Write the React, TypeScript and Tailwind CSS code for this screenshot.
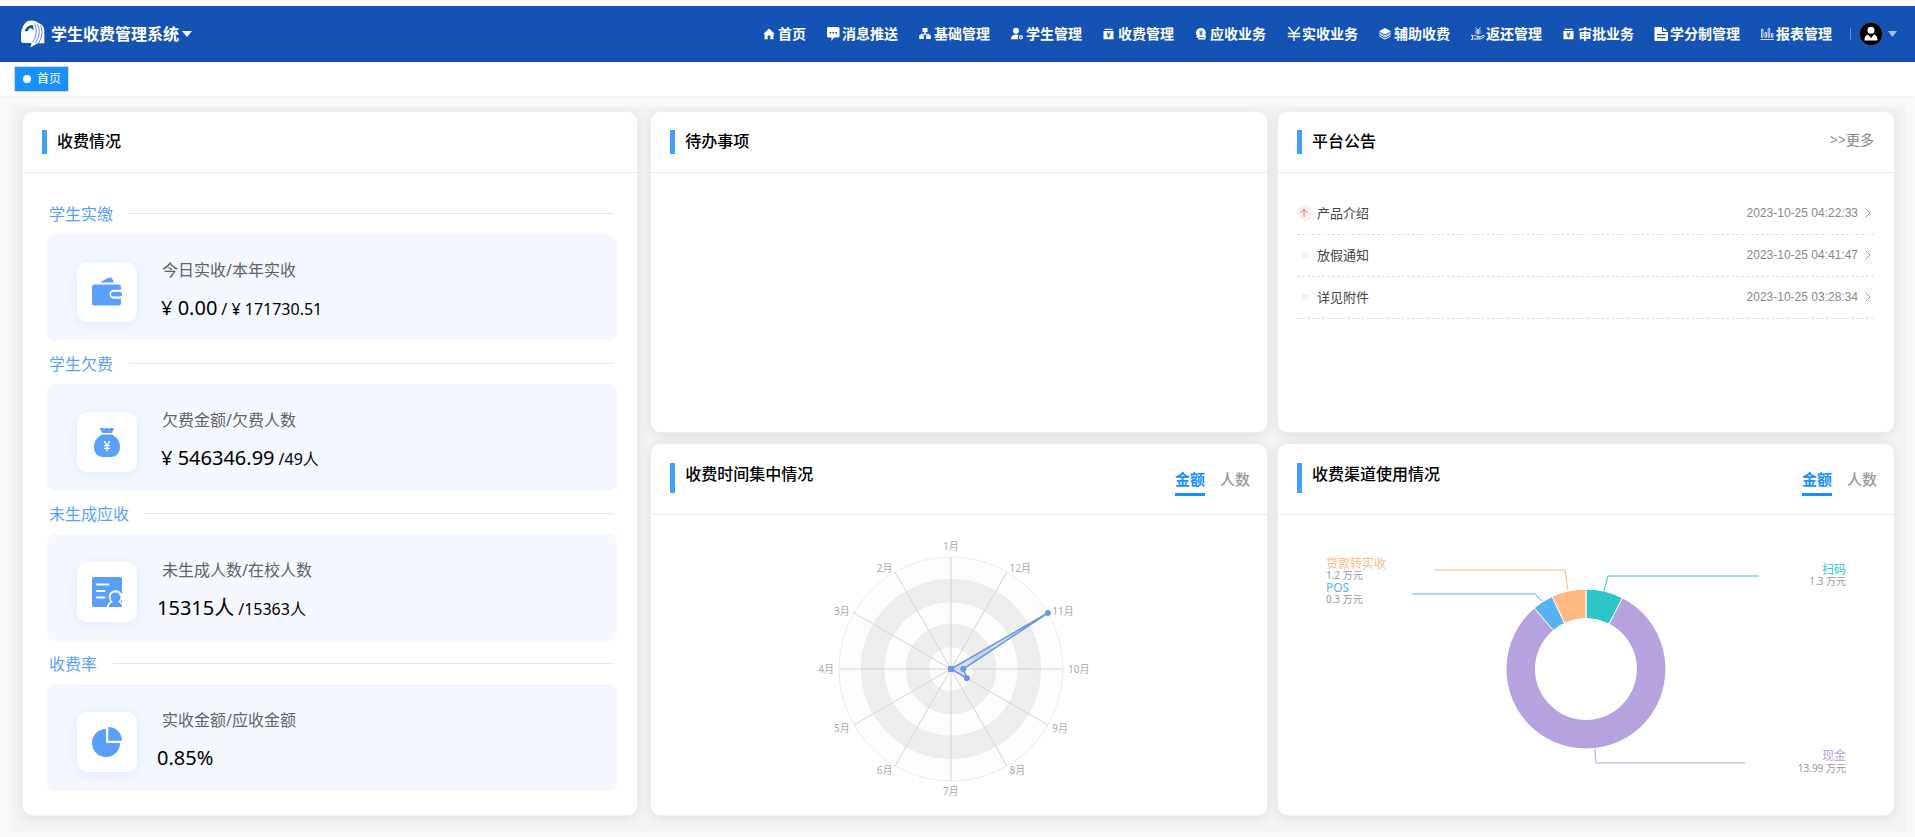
import { useState, type ReactNode } from 'react';
import clsx from 'clsx';

type Mode = 'amount' | 'people';

/* ---------- nav icons, all on a 16px grid ---------- */

function NavIcon({ children }: { children: ReactNode }) {
  return (
    <svg viewBox="0 0 16 16" className="size-4 shrink-0" fill="currentColor" aria-hidden="true">
      {children}
    </svg>
  );
}

const HomeIcon = (
  <NavIcon>
    <path d="M7 2.500 1.300 8H2.500v5.200h3.200V9.500h2.600v3.700h3.200V8h1.300z" />
  </NavIcon>
);

const MessageIcon = (
  <NavIcon>
    <path
      fillRule="evenodd"
      d="M2.500 1h9.500A1.500 1.500 0 0 1 13.500 2.500v7.500a1.500 1.500 0 0 1-1.500 1.500H8L5.500 15v-3.500h-3A1.500 1.500 0 0 1 1 10V2.500A1.500 1.500 0 0 1 2.500 1zM3.500 6v1.500h1.700V6zm2.900 0v1.500h1.700V6zm2.900 0v1.500H11V6z"
    />
  </NavIcon>
);

const SitemapIcon = (
  <NavIcon>
    <path d="M4.500 2h5v4H7.700v1.700h3.600v1.500h1.500V13H8.200V9.200H10v-.5H4v.5h1.800V13H1.200V9.200h1.500V7.700h3.600V6H4.500z" />
  </NavIcon>
);

const StudentIcon = (
  <NavIcon>
    <circle cx="6" cy="4.800" r="3" />
    <path d="M1 13.200c0-3.200 2-4.700 5-4.700 1 0 2 .2 2.700.6-.9 1-1.100 2.700-.4 4.100z" />
    <path fillRule="evenodd" d="M11 9.300a2 2 0 1 1 0 4.100 2 2 0 0 1 0-4.100zm0 1.300a.8.8 0 1 0 0 1.600.8.8 0 0 0 0-1.600z" />
  </NavIcon>
);

const CashBoxIcon = (
  <NavIcon>
    <path d="M2.500 2.800h8V4h-8z" />
    <path
      fillRule="evenodd"
      d="M1.500 5h10v8.200h-10zm2.900 1.500 1.300 1.900h-1v.8h1.400v.5H4.700v.7h1.400v1.200h.9v-1.200h1.400v-.7H7v-.5h1.400v-.8h-1l1.300-1.900H7.600L6.500 8.100 5.400 6.500z"
    />
  </NavIcon>
);

const CoinHandIcon = (
  <NavIcon>
    <path
      fillRule="evenodd"
      d="M7 2a4.700 4.700 0 0 1 4.100 7c.8.500 1.100 1.200.8 2l-.6 1.400v1H4.300v-1.500L2 11l1.300-1A4.700 4.700 0 0 1 7 2zM5.100 4.400l1.400 2.200h-1v.7h1.100v.6H5.500v.7h1.100v1.200h.9V8.600h1.100v-.7H7.500v-.6h1.100v-.7h-1L9 4.400H8L7 6 6.100 4.400zM4 10.900l2.300.9h4v-.7H6.700z"
    />
  </NavIcon>
);

const YuanIcon = (
  <NavIcon>
    <path d="m2.500 1 5.500 6.500L13.500 1M1.800 7.500h12.400M1.800 10.500h12.400M8 7.500V15" fill="none" stroke="currentColor" strokeWidth="1.400" />
  </NavIcon>
);

const LayersIcon = (
  <NavIcon>
    <path d="m7 2 6 3.200-6 3.300-6-3.300z" />
    <path d="m1.300 7.900 5.700 3.100 5.700-3.100M1.300 10l5.700 3.100 5.700-3.100" fill="none" stroke="currentColor" strokeWidth="1" />
    <path d="m1 6 6 3.300L13 6v1l-6 3.300L1 7z" opacity=".7" />
  </NavIcon>
);

const RefundIcon = (
  <NavIcon>
    <path
      d="m5.500 1.500 2.500 3 2.500-3M5.300 5h5.400M5.300 7h5.400M8 4.500v4.300M1 9.300h1.600v4.200H1M3.400 10c1.500-1 2.700-.6 3.700.4h2c1 0 1 1.400 0 1.400H6.600M9.800 11.200l3.400-1.700c1.200-.5 1.700.7.900 1.300L10.600 13H3.400"
      fill="none"
      stroke="currentColor"
      strokeWidth=".9"
    />
  </NavIcon>
);

const DocumentIcon = (
  <NavIcon>
    <path fillRule="evenodd" d="M1.500 1H8v5h6v8a1 1 0 0 1-1 1H1.500a1 1 0 0 1-1-1V2a1 1 0 0 1 1-1zM3 8v1.300h8.500V8zm0 3v1.300h8.500V11z" />
    <path d="M9 1.200V5h4.500z" />
  </NavIcon>
);

const ReportIcon = (
  <NavIcon>
    <path
      d="M.5 13.500H14M1.500 3.500H3v7.800H1.500zM5 6.500h1.500v4.800H5zM8.200 2.500h1.500v8.800H8.200zM11.500 7.500H13v3.800h-1.500z"
      fill="none"
      stroke="currentColor"
      strokeWidth=".8"
    />
  </NavIcon>
);

const NAV_ITEMS = [
  { label: '首页', icon: HomeIcon },
  { label: '消息推送', icon: MessageIcon },
  { label: '基础管理', icon: SitemapIcon },
  { label: '学生管理', icon: StudentIcon },
  { label: '收费管理', icon: CashBoxIcon },
  { label: '应收业务', icon: CoinHandIcon },
  { label: '实收业务', icon: YuanIcon },
  { label: '辅助收费', icon: LayersIcon },
  { label: '返还管理', icon: RefundIcon },
  { label: '审批业务', icon: CashBoxIcon },
  { label: '学分制管理', icon: DocumentIcon },
  { label: '报表管理', icon: ReportIcon },
];

/* ---------- fee summary icons ---------- */

const WalletIcon = (
  <svg viewBox="0 0 30 30" className="size-[30px]" fill="#5a9ff9" aria-hidden="true">
    <path d="m8 5.500 7.800-4.400q3-1.300 4.500.8l1.700 3.600z" />
    <path d="M2.500 7.500h24A2.500 2.500 0 0 1 29 10v2.700h-7a4.500 4.500 0 0 0 0 9h7v4.300a2.500 2.500 0 0 1-2.500 2.500h-24A2.500 2.500 0 0 1 0 26V10a2.500 2.500 0 0 1 2.500-2.500z" />
    <rect x="19" y="14.800" width="11" height="4.800" rx="2.400" />
  </svg>
);

const MoneyBagIcon = (
  <svg viewBox="0 0 30 30" className="size-[30px]" fill="#5a9ff9" aria-hidden="true">
    <path d="M7 .8q2 1.400 3.400-.3 2 1.800 4.600 0 2.400 1.800 4.600 0 1.600 1.700 3.400.3L19.500 6h-9z" />
    <path
      fillRule="evenodd"
      d="M10 7.500h10c4.600 2.400 8 6.600 8 12.500 0 6-4 10-9 10h-8c-5 0-9-4-9-10 0-5.900 3.400-10.100 8-12.500zm1.500 6.500 2.400 4H12v1.300h2.300v1.400H12V22h2.300v2h1.500v-2H18v-1.300h-2.200v-1.400H18V18h-1.800l2.400-4h-1.700L15 17.200 13.200 14z"
    />
  </svg>
);

const RosterIcon = (
  <svg viewBox="0 0 30 30" className="size-[30px]" aria-hidden="true">
    <rect width="30" height="30" rx="2" fill="#5a9ff9" />
    <path d="M5 7.500h11.500M5 14h7.500M5 20.500h7.500" stroke="#fff" strokeWidth="2" strokeLinecap="round" />
    <path d="M14.800 30.500c.3-3.500 1.800-4.400 3.800-6-4.500-6.800.6-11.300 5-11.300s9.500 4.500 5 11.300L31 27v4z" fill="#fff" />
    <path d="M16.800 30c0-3 1.800-4.300 4-5.100-4.700-4.800-1.300-9.300 2.700-9.300s7.400 4.500 2.700 9.300c2.200.8 3.800 2.100 3.800 5.100z" fill="#5a9ff9" />
  </svg>
);

const PieIcon = (
  <svg viewBox="0 0 30 30" className="size-[30px]" fill="#5a9ff9" aria-hidden="true">
    <path d="M14 2v14h14A14 14 0 1 1 14 2z" />
    <path d="M16.300 0A13.700 13.700 0 0 1 30 13.700H16.300z" />
  </svg>
);

const FEE_SECTIONS = [
  { title: '学生实缴', label: '今日实收/本年实收', main: '¥ 0.00', sub: '/ ¥ 171730.51', icon: WalletIcon, currency: true },
  { title: '学生欠费', label: '欠费金额/欠费人数', main: '¥ 546346.99', sub: '/49人', icon: MoneyBagIcon, currency: true },
  { title: '未生成应收', label: '未生成人数/在校人数', main: '15315人', sub: '/15363人', icon: RosterIcon, currency: false },
  { title: '收费率', label: '实收金额/应收金额', main: '0.85%', sub: '', icon: PieIcon, currency: false },
];

const NOTICES = [
  { title: '产品介绍', time: '2023-10-25 04:22:33', pinned: true },
  { title: '放假通知', time: '2023-10-25 04:41:47', pinned: false },
  { title: '详见附件', time: '2023-10-25 03:28:34', pinned: false },
];

/* ---------- shared pieces ---------- */

function Card({ className, children }: { className?: string; children: ReactNode }) {
  return (
    <section
      className={clsx(
        'flex flex-col rounded-[10px] border border-[#ebeef5] bg-white shadow-[0_2px_12px_rgba(0,0,0,0.1)]',
        className,
      )}
    >
      {children}
    </section>
  );
}

function CardTitle({ children, className }: { children: ReactNode; className: string }) {
  return (
    <h2 className={clsx('border-l-[5px] border-[#409eff] pl-[10px] text-[16px] leading-[22px] font-medium text-black', className)}>
      {children}
    </h2>
  );
}

function CardHeader({ title, children }: { title: string; children?: ReactNode }) {
  return (
    <header className="flex h-[61px] shrink-0 items-start justify-between border-b border-[#e6ebf5] px-5 pt-[18px] pl-[19px]">
      <CardTitle className="h-6">{title}</CardTitle>
      {children}
    </header>
  );
}

function ChartHeader({ title }: { title: string }) {
  const [mode, setMode] = useState<Mode>('amount');
  const tabs: { id: Mode; label: string }[] = [
    { id: 'amount', label: '金额' },
    { id: 'people', label: '人数' },
  ];

  return (
    <header className="flex h-[71px] shrink-0 items-start justify-between border-b border-[#e6ebf5] pt-[19px] pr-[17px] pl-[19px]">
      <CardTitle className="h-[30px]">{title}</CardTitle>
      <div className="flex gap-[15px] pt-1">
        {tabs.map((tab) => (
          <button
            key={tab.id}
            type="button"
            onClick={() => setMode(tab.id)}
            className={clsx(
              'cursor-pointer border-b-[3px] pb-px text-[15px] leading-[25px]',
              mode === tab.id ? 'border-[#1890ff] font-bold text-[#1890ff]' : 'border-transparent font-medium text-[#999]',
            )}
          >
            {tab.label}
          </button>
        ))}
      </div>
    </header>
  );
}

/* ---------- charts ---------- */

const RADAR = { cx: 299, cy: 154, r: 112 };
// months run counter-clockwise from the top; values are a share of the radius
const MONTHS = [0, 0, 0, 0, 0, 0, 0, 0, 0.165, 0.11, 1, 0];

function polar(cx: number, cy: number, r: number, deg: number) {
  const rad = (deg * Math.PI) / 180;
  return { x: cx + r * Math.sin(rad), y: cy - r * Math.cos(rad) };
}

function RadarChart() {
  const { cx, cy, r } = RADAR;
  const points = MONTHS.map((value, i) => polar(cx, cy, r * value, -30 * i));

  return (
    <svg viewBox="0 0 614 300" className="h-[300px] w-full" role="img" aria-label="收费时间集中情况">
      {[5, 4, 3, 2, 1].map((n) => (
        <circle key={n} cx={cx} cy={cy} r={(r * n) / 5} fill={n % 2 ? '#fdfdfd' : '#ededed'} stroke="#ececec" />
      ))}
      {MONTHS.map((_, i) => {
        const end = polar(cx, cy, r, -30 * i);
        return <line key={i} x1={cx} y1={cy} x2={end.x} y2={end.y} stroke="#d3d3d3" />;
      })}
      {MONTHS.map((_, i) => {
        const end = polar(cx, cy, r + 5, -30 * i);
        const side = i % 6 === 0 ? 'middle' : i < 6 ? 'end' : 'start';
        const dy = i === 0 ? -6 : i === 6 ? 5 : 0;
        return (
          <text
            key={i}
            x={end.x}
            y={end.y + dy}
            textAnchor={side}
            dominantBaseline="central"
            fontSize="10"
            fill="#aaa"
          >
            {i + 1}月
          </text>
        );
      })}
      <polygon
        points={points.map((p) => `${p.x},${p.y}`).join(' ')}
        fill="#6f9be8"
        fillOpacity=".3"
        stroke="#6f97e0"
        strokeWidth="1.500"
        strokeLinejoin="round"
      />
      {points.map((p, i) => (
        <circle key={i} cx={p.x} cy={p.y} r="3" fill="#6f97e0" />
      ))}
    </svg>
  );
}

const SLICES = [
  {
    name: '扫码', value: '1.3 万元', color: '#2ec7c9', from: 0, to: 27.2,
    line: '326,76 330,61 481,61', x: 568, y: 54, anchor: 'end' as const,
  },
  {
    name: '现金', value: '13.99 万元', color: '#b6a2de', from: 27.2, to: 319.8,
    line: '317,234 318,248 467,248', x: 568, y: 241, anchor: 'end' as const,
  },
  {
    name: 'POS', value: '0.3 万元', color: '#5ab1ef', from: 319.8, to: 335,
    line: '264,86 257,79 134,79', x: 48, y: 72, anchor: 'start' as const,
  },
  {
    name: '贷款转实收', value: '1.2 万元', color: '#ffb980', from: 335, to: 360,
    line: '290,75 287,55 156,55', x: 48, y: 48, anchor: 'start' as const,
  },
];

function ring(from: number, to: number) {
  const cx = 308;
  const cy = 154;
  const a = polar(cx, cy, 80, from);
  const b = polar(cx, cy, 80, to);
  const c = polar(cx, cy, 50.5, to);
  const d = polar(cx, cy, 50.5, from);
  const large = to - from > 180 ? 1 : 0;
  return `M${a.x} ${a.y}A80 80 0 ${large} 1 ${b.x} ${b.y}L${c.x} ${c.y}A50.5 50.5 0 ${large} 0 ${d.x} ${d.y}Z`;
}

function DonutChart() {
  return (
    <svg viewBox="0 0 616 300" className="h-[300px] w-full" role="img" aria-label="收费渠道使用情况">
      {SLICES.map((slice) => (
        <g key={slice.name}>
          <path d={ring(slice.from, slice.to)} fill={slice.color} stroke="#fff" />
          <polyline points={slice.line} fill="none" stroke={slice.color} />
          <text x={slice.x} y={slice.y} textAnchor={slice.anchor} dominantBaseline="central" fontSize="12" fill={slice.color}>
            {slice.name}
          </text>
          <text x={slice.x} y={slice.y + 12} textAnchor={slice.anchor} dominantBaseline="central" fontSize="10" fill="#999">
            {slice.value}
          </text>
        </g>
      ))}
    </svg>
  );
}

/* ---------- page ---------- */

function TopBar() {
  return (
    <div className="flex h-14 items-center justify-between bg-[#1453b4] pr-[18px] pl-5 text-white">
      <button type="button" className="flex cursor-pointer items-center">
        <svg viewBox="0 0 26 28" className="mr-[5px] h-7 w-[26px]" aria-hidden="true">
          <path d="M1 13.500C2 5 6 .500 11.500.500c3.200 0 5.500 1 7 2.800 3.500.7 5.800 3.700 5.800 8.200v11.700h-6.800L10.500 27.500l1-4.500H3q-2 0-2-2z" fill="#fff" />
          <path d="M4.500 11.300C6 7 9 4.800 12.800 5c.8 1.900.9 4.300.4 6.300-.3-2.800-2-3.500-3.700-2.500-.9.500-1.500 1.400-1.900 2.500z" fill="#1453b4" />
          <path d="M14.500 3.500c3 6.500 2 13.500-2.200 19M17.500 4c3 6.500 2 13.500-2.500 19M20.500 5.500c2.400 6 1.700 12-2 17.500" fill="none" stroke="#1453b4" strokeWidth=".7" />
        </svg>
        <span className="text-[16px] leading-6 font-bold">学生收费管理系统</span>
        <svg viewBox="0 0 10 6" className="ml-[3px] h-[6px] w-[10px]" fill="currentColor" aria-hidden="true">
          <path d="M0 0h10L5 6z" />
        </svg>
      </button>

      <div className="flex items-center">
        <nav className="flex gap-5">
          {NAV_ITEMS.map((item) => (
            <a key={item.label} href="#" className="flex items-center text-[14px] leading-5 font-bold whitespace-nowrap">
              {item.icon}
              {item.label}
            </a>
          ))}
        </nav>
        <span className="ml-[18px] h-3 w-px bg-[#6d93cf]" />
        <button type="button" aria-label="用户" className="ml-2 flex cursor-pointer items-center gap-[5px]">
          <svg viewBox="0 0 24 24" className="size-6" aria-hidden="true">
            <circle cx="12" cy="12" r="11.700" fill="#000" stroke="#5577a8" strokeWidth=".6" />
            <circle cx="12" cy="8.300" r="3.500" fill="#fff" />
            <path d="M5.500 18.500c0-3.600 1-5 3.500-5.900l3 3.400 3-3.400c2.500.9 3.500 2.300 3.500 5.900z" fill="#fff" />
          </svg>
          <svg viewBox="0 0 9 6" className="h-[6px] w-[9px]" fill="#a9c0e6" aria-hidden="true">
            <path d="M0 0h9L4.500 6z" />
          </svg>
        </button>
      </div>
    </div>
  );
}

function FeeCard() {
  return (
    <Card className="flex-1">
      <CardHeader title="收费情况" />
      <div className="pt-[18px] pr-5 pb-6 pl-6">
        {FEE_SECTIONS.map((section) => (
          <div key={section.title}>
            <div className="flex h-[43px] items-center gap-4 pt-[2px] pr-[3px] pl-[2px]">
              <h3 className="text-[16px] leading-6 text-[#5a9ff9]">{section.title}</h3>
              <span className="h-px flex-1 bg-[#e4e7ed]" />
            </div>
            <div className="flex h-[107px] items-start rounded-lg bg-[#f5f8ff] pt-6 pl-[30px]">
              <div className="mt-1 flex size-[60px] shrink-0 items-center justify-center rounded-[10px] bg-white shadow-[0_2px_12px_rgba(64,128,255,0.12)]">
                {section.icon}
              </div>
              <div className="ml-5">
                <p className="pl-[5px] text-[16px] leading-6 text-[#606266]">{section.label}</p>
                <p className={clsx('mt-[10px] leading-8 text-black', section.currency ? 'pl-1' : 'pl-0')}>
                  <span className="text-[20px]">{section.main}</span>
                  <span className="ml-1 text-[16px]">{section.sub}</span>
                </p>
              </div>
            </div>
          </div>
        ))}
      </div>
    </Card>
  );
}

function NoticeCard() {
  return (
    <Card className="flex-1">
      <CardHeader title="平台公告">
        <a href="#" className="text-[14px] leading-5 text-[#888]">
          &gt;&gt;更多
        </a>
      </CardHeader>
      <ul className="pt-5 pr-5 pl-[19px]">
        {NOTICES.map((notice) => (
          <li key={notice.title} className="border-b border-dashed border-[#cfe2ea]">
            <a href="#" className="flex h-[41px] items-center pb-px">
              <span className="flex w-4 justify-center">
                {notice.pinned ? (
                  <svg viewBox="0 0 16 16" className="size-4" aria-hidden="true">
                    <circle cx="8" cy="8" r="8" fill="#fff0f0" />
                    <path d="M7 12V4.500M3.500 8 7 4.300 10.500 8" fill="none" stroke="#f56c6c" />
                  </svg>
                ) : (
                  <span className="size-2 rounded-full bg-[#ecf5ff]" />
                )}
              </span>
              <span className="ml-1 flex-1 text-[13px] leading-5 text-[#444]">{notice.title}</span>
              <time className="font-['Liberation_Sans',sans-serif] text-[12px] leading-5 text-[#888]">{notice.time}</time>
              <svg viewBox="0 0 6 10" className="mr-[3px] ml-[7px] h-[10px] w-[6px]" fill="none" stroke="#999" aria-hidden="true">
                <path d="m.5.500 4.500 4.500-4.500 4.500" />
              </svg>
            </a>
          </li>
        ))}
      </ul>
    </Card>
  );
}

export default function App() {
  return (
    <div className="min-h-screen bg-[#f8f9fb] font-['Noto_Sans','Noto_Sans_CJK_SC',sans-serif]">
      <div className="bg-white pt-[6px] shadow-[0_1px_3px_rgba(0,0,0,0.04)]">
        <TopBar />
        <div className="flex h-[34px] items-center px-[14px] pb-px">
          <button
            type="button"
            className="flex h-[26px] cursor-pointer items-center gap-[6px] border border-[#d8dce5] bg-[#1890ff] pr-[7px] pl-2 text-[12px] text-white"
          >
            <span className="size-2 rounded-full bg-white" />
            首页
          </button>
        </div>
      </div>

      <main className="pt-[10px] pr-[9px] pb-[6px] pl-[11px]">
        <div className="flex overflow-hidden bg-[#f5f5f5] px-[11px] pt-[5px] pb-[15px]">
          <div className="mr-3 flex w-[32.9%] flex-col">
            <FeeCard />
          </div>
          <div className="mr-[9px] flex flex-1 flex-col gap-[10px]">
            <Card className="flex-1">
              <CardHeader title="待办事项" />
            </Card>
            <Card>
              <ChartHeader title="收费时间集中情况" />
              <RadarChart />
            </Card>
          </div>
          <div className="flex flex-1 flex-col gap-[10px]">
            <NoticeCard />
            <Card>
              <ChartHeader title="收费渠道使用情况" />
              <DonutChart />
            </Card>
          </div>
        </div>
      </main>
    </div>
  );
}
